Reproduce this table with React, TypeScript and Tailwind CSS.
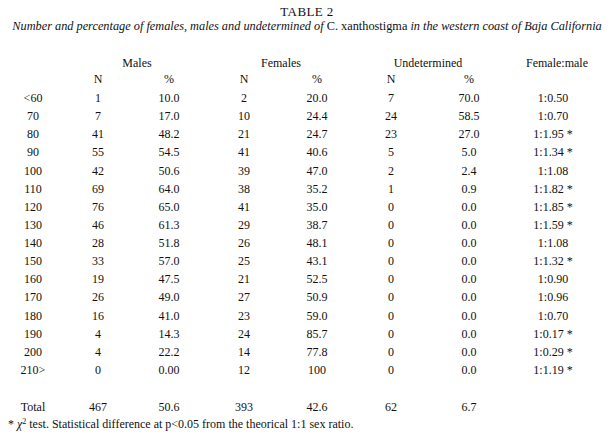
import React from 'react';

type Row = {
  size: string;
  mN: string;
  mP: string;
  fN: string;
  fP: string;
  uN: string;
  uP: string;
  ratio: string;
};

const rows: Row[] = [
  { size: '<60', mN: '1', mP: '10.0', fN: '2', fP: '20.0', uN: '7', uP: '70.0', ratio: '1:0.50' },
  { size: '70', mN: '7', mP: '17.0', fN: '10', fP: '24.4', uN: '24', uP: '58.5', ratio: '1:0.70' },
  { size: '80', mN: '41', mP: '48.2', fN: '21', fP: '24.7', uN: '23', uP: '27.0', ratio: '1:1.95 *' },
  { size: '90', mN: '55', mP: '54.5', fN: '41', fP: '40.6', uN: '5', uP: '5.0', ratio: '1:1.34 *' },
  { size: '100', mN: '42', mP: '50.6', fN: '39', fP: '47.0', uN: '2', uP: '2.4', ratio: '1:1.08' },
  { size: '110', mN: '69', mP: '64.0', fN: '38', fP: '35.2', uN: '1', uP: '0.9', ratio: '1:1.82 *' },
  { size: '120', mN: '76', mP: '65.0', fN: '41', fP: '35.0', uN: '0', uP: '0.0', ratio: '1:1.85 *' },
  { size: '130', mN: '46', mP: '61.3', fN: '29', fP: '38.7', uN: '0', uP: '0.0', ratio: '1:1.59 *' },
  { size: '140', mN: '28', mP: '51.8', fN: '26', fP: '48.1', uN: '0', uP: '0.0', ratio: '1:1.08' },
  { size: '150', mN: '33', mP: '57.0', fN: '25', fP: '43.1', uN: '0', uP: '0.0', ratio: '1:1.32 *' },
  { size: '160', mN: '19', mP: '47.5', fN: '21', fP: '52.5', uN: '0', uP: '0.0', ratio: '1:0.90' },
  { size: '170', mN: '26', mP: '49.0', fN: '27', fP: '50.9', uN: '0', uP: '0.0', ratio: '1:0.96' },
  { size: '180', mN: '16', mP: '41.0', fN: '23', fP: '59.0', uN: '0', uP: '0.0', ratio: '1:0.70' },
  { size: '190', mN: '4', mP: '14.3', fN: '24', fP: '85.7', uN: '0', uP: '0.0', ratio: '1:0.17 *' },
  { size: '200', mN: '4', mP: '22.2', fN: '14', fP: '77.8', uN: '0', uP: '0.0', ratio: '1:0.29 *' },
  { size: '210>', mN: '0', mP: '0.00', fN: '12', fP: '100', uN: '0', uP: '0.0', ratio: '1:1.19 *' },
];

// column template shared by header and body rows
const cols = 'grid grid-cols-[66px_64px_78px_72px_74px_74px_82px_86px] text-center';

function DataRow({ r }: { r: Row }) {
  return (
    <div className={`${cols} h-[18.13px] leading-[18px]`}>
      <span>{r.size}</span>
      <span>{r.mN}</span>
      <span>{r.mP}</span>
      <span>{r.fN}</span>
      <span>{r.fP}</span>
      <span>{r.uN}</span>
      <span>{r.uP}</span>
      <span>{r.ratio}</span>
    </div>
  );
}

export default function App() {
  return (
    <div className="w-[614px] h-[439px] overflow-hidden bg-white text-[#111] text-[12px] font-['Liberation_Serif','Times_New_Roman',serif] pt-[5px]">
      <div className="text-center leading-[14px] text-[13px] tracking-[0.4px]">TABLE 2</div>
      <div className="text-center leading-[14px] text-[12.3px] italic whitespace-nowrap">
        Number and percentage of females, males and undetermined of <span className="not-italic">C. xanthostigma</span> in the western coast of Baja California
      </div>

      <div className="mt-[22px]">
        <div className={`${cols} h-[16px] leading-[16px]`}>
          <span />
          <span className="col-span-2">Males</span>
          <span className="col-span-2">Females</span>
          <span className="col-span-2 pr-[8px]">Undetermined</span>
          <span className="pl-[8px]">Female:male</span>
        </div>
        <div className={`${cols} h-[16px] leading-[16px]`}>
          <span />
          <span>N</span>
          <span>%</span>
          <span>N</span>
          <span>%</span>
          <span>N</span>
          <span>%</span>
          <span />
        </div>

        <div className="mt-[2px]">
          {rows.map((r) => (
            <DataRow key={r.size} r={r} />
          ))}
        </div>

        <div className={`${cols} mt-[19px] h-[18px] leading-[18px]`}>
          <span>Total</span>
          <span>467</span>
          <span>50.6</span>
          <span>393</span>
          <span>42.6</span>
          <span>62</span>
          <span>6.7</span>
          <span />
        </div>
      </div>

      <p className="mt-[1px] pl-[8px] text-[12px] leading-[14px]">
        * <span className="italic">χ</span>
        <sup className="text-[8px]">2</sup> test. Statistical difference at p&lt;0.05 from the theorical 1:1 sex ratio.
      </p>
    </div>
  );
}
